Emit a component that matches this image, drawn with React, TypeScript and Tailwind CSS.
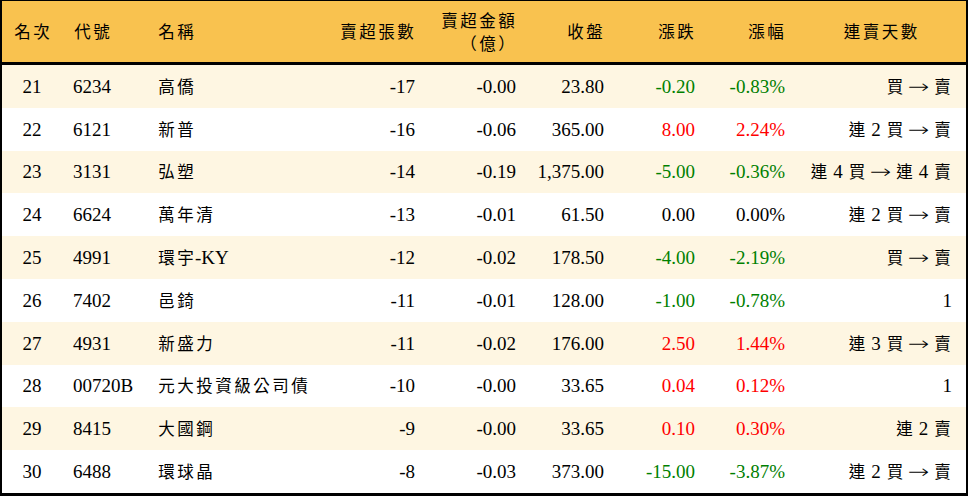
import React from "react";

type Row = {
  rank: string;
  code: string;
  name: string;
  qty: string;
  amt: string;
  close: string;
  chg: string;
  pct: string;
  streak: string;
};

const rows: Row[] = [
  { rank: "21", code: "6234", name: "高僑", qty: "-17", amt: "-0.00", close: "23.80", chg: "-0.20", pct: "-0.83%", streak: "買 → 賣" },
  { rank: "22", code: "6121", name: "新普", qty: "-16", amt: "-0.06", close: "365.00", chg: "8.00", pct: "2.24%", streak: "連 2 買 → 賣" },
  { rank: "23", code: "3131", name: "弘塑", qty: "-14", amt: "-0.19", close: "1,375.00", chg: "-5.00", pct: "-0.36%", streak: "連 4 買 → 連 4 賣" },
  { rank: "24", code: "6624", name: "萬年清", qty: "-13", amt: "-0.01", close: "61.50", chg: "0.00", pct: "0.00%", streak: "連 2 買 → 賣" },
  { rank: "25", code: "4991", name: "環宇-KY", qty: "-12", amt: "-0.02", close: "178.50", chg: "-4.00", pct: "-2.19%", streak: "買 → 賣" },
  { rank: "26", code: "7402", name: "邑錡", qty: "-11", amt: "-0.01", close: "128.00", chg: "-1.00", pct: "-0.78%", streak: "1" },
  { rank: "27", code: "4931", name: "新盛力", qty: "-11", amt: "-0.02", close: "176.00", chg: "2.50", pct: "1.44%", streak: "連 3 買 → 賣" },
  { rank: "28", code: "00720B", name: "元大投資級公司債", qty: "-10", amt: "-0.00", close: "33.65", chg: "0.04", pct: "0.12%", streak: "1" },
  { rank: "29", code: "8415", name: "大國鋼", qty: "-9", amt: "-0.00", close: "33.65", chg: "0.10", pct: "0.30%", streak: "連 2 賣" },
  { rank: "30", code: "6488", name: "環球晶", qty: "-8", amt: "-0.03", close: "373.00", chg: "-15.00", pct: "-3.87%", streak: "連 2 買 → 賣" },
];

const colorOf = (v: string) =>
  v.startsWith("-") ? "text-[#008000]" : v === "0.00" || v === "0.00%" ? "text-black" : "text-[#ff0000]";

const isCJK = (ch: string) => /[\u3000-\u9fff\uff00-\uffef]/.test(ch);

function T({ s }: { s: string }) {
  const parts: React.ReactNode[] = [];
  let buf = "";
  let k = 0;
  const flush = () => {
    if (buf) {
      parts.push(<span key={k++}>{buf}</span>);
      buf = "";
    }
  };
  for (const ch of s) {
    if (isCJK(ch)) {
      flush();
      parts.push(
        <span
          key={k++}
          className="inline-block w-[19px] text-center text-[16.5px]"
          style={{ fontFamily: '"Noto Sans CJK TC", serif' }}
        >
          {ch}
        </span>
      );
    } else if (ch === "→") {
      flush();
      parts.push(
        <span
          key={k++}
          className="inline-block w-[19px] text-center text-[19px] font-light scale-x-[1.35]"
          style={{ fontFamily: '"DejaVu Sans", sans-serif' }}
        >
          →
        </span>
      );
    } else {
      buf += ch;
    }
  }
  flush();
  return <>{parts}</>;
}

const GRID = "grid grid-cols-[60px_84px_210px_69px_101px_88px_91px_90px_171px]";

export default function App() {
  return (
    <div
      className="w-[968px] h-[496px] bg-white text-black text-[19px] leading-none border-black border-t-[1px] border-l-2 border-r-2 border-b-[3px] overflow-hidden"
      style={{ fontFamily: '"Liberation Serif", "Noto Sans CJK TC", serif' }}
    >
      <div className={`${GRID} h-[61px] bg-[#f9c24f] items-center`}>
        <div className="text-center"><T s="名次" /></div>
        <div className="pl-[11px]"><T s="代號" /></div>
        <div className="pl-[11px]"><T s="名稱" /></div>
        <div className="text-right pr-[10px] whitespace-nowrap -ml-[20px]"><T s="賣超張數" /></div>
        <div className="text-right pr-[10px] leading-[23px]">
          <div><T s="賣超金額" /></div>
          <div><T s="（億）" /></div>
        </div>
        <div className="text-right pr-[10px]"><T s="收盤" /></div>
        <div className="text-right pr-[10px]"><T s="漲跌" /></div>
        <div className="text-right pr-[10px]"><T s="漲幅" /></div>
        <div className="text-center"><T s="連賣天數" /></div>
      </div>
      <div className="h-[3px] bg-black" />
      <div className="flex flex-col">
        {rows.map((r, i) => (
          <div
            key={r.rank}
            className={`${GRID} h-[42.8px] items-center ${i % 2 === 0 ? "bg-[#fef6e2]" : "bg-white"}`}
          >
            <div className="text-center">{r.rank}</div>
            <div className="pl-[11px]">{r.code}</div>
            <div className="pl-[11px] whitespace-nowrap"><T s={r.name} /></div>
            <div className="text-right pr-[10px]">{r.qty}</div>
            <div className="text-right pr-[10px]">{r.amt}</div>
            <div className="text-right pr-[10px]">{r.close}</div>
            <div className={`text-right pr-[10px] ${colorOf(r.chg)}`}>{r.chg}</div>
            <div className={`text-right pr-[10px] ${colorOf(r.pct)}`}>{r.pct}</div>
            <div className="text-right pr-[14px] whitespace-nowrap"><T s={r.streak} /></div>
          </div>
        ))}
      </div>
    </div>
  );
}
